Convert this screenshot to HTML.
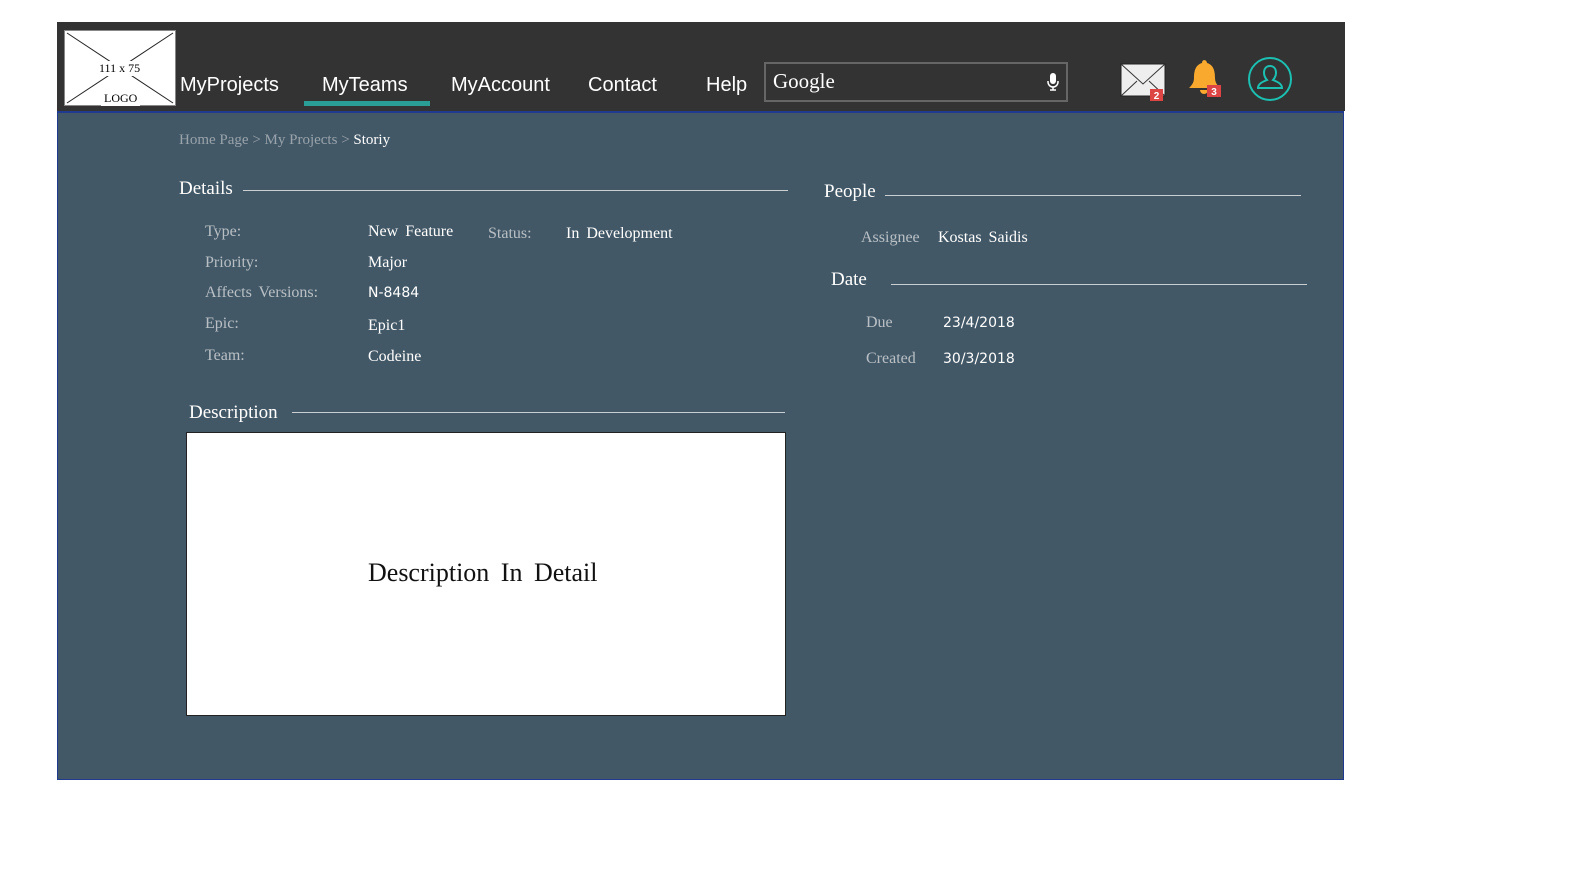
<!DOCTYPE html>
<html style="overflow:hidden;width:1579px;height:875px"><head><meta charset="utf-8"><style>
html,body{margin:0;padding:0}
body{width:1579px;height:875px;background:#fff;position:relative;overflow:hidden;font-family:"Liberation Serif",serif}
.a{position:absolute;white-space:nowrap}
#hdr{left:57px;top:22px;width:1288px;height:89px;background:#333}
#main{left:57px;top:111px;width:1285px;height:666px;background:#435867;border:1px solid #1f3a8f;border-top:2px solid #1f3a8f}
.nav{font-family:"Liberation Sans",sans-serif;color:#fff;font-size:20px;top:74px}
.lab{color:#b8c0c6;font-size:16px;word-spacing:3px}
.val{color:#fff;font-size:16px;word-spacing:3px}
.h{color:#fff;font-size:19px}
.ln{height:1px;background:#c9cfd3}
</style></head><body>
<div class="a" id="hdr"></div>
<div class="a" id="main"></div>
<div class="a" style="left:64px;top:30px;width:110px;height:74px;background:#fff;border:1px solid #888">
<svg width="110" height="74" style="position:absolute;left:0;top:0"><line x1="2" y1="2" x2="108" y2="72" stroke="#222"/><line x1="108" y1="2" x2="2" y2="72" stroke="#222"/></svg>
<div class="a" style="left:31px;top:30px;background:#fff;font-size:12px;padding:0 3px">111 x 75</div>
<div class="a" style="left:36px;top:60px;background:#fff;font-size:12px;padding:0 3px">LOGO</div>
</div>
<div class="a nav" style="left:180px">MyProjects</div>
<div class="a nav" style="left:322px">MyTeams</div>
<div class="a" style="left:304px;top:101px;width:126px;height:5px;background:#2a9d95"></div>
<div class="a nav" style="left:451px">MyAccount</div>
<div class="a nav" style="left:588px">Contact</div>
<div class="a nav" style="left:706px">Help</div>
<div class="a" style="left:764px;top:62px;width:300px;height:36px;border:2px solid #666"></div>
<div class="a" style="left:773px;top:69px;color:#fff;font-size:21px">Google</div>
<svg class="a" style="left:1045px;top:72px" width="16" height="20"><rect x="5" y="1" width="6" height="11" rx="3" fill="#fff"/><path d="M3 9v1a5 5 0 0 0 10 0V9M8 15v3M5 18h6" stroke="#fff" fill="none" stroke-width="1.5"/></svg>
<svg class="a" style="left:1120px;top:63px" width="48" height="40"><rect x="1" y="1" width="44" height="32" fill="#eee" stroke="#222"/><path d="M1 1l22 20 22-20M1 33l16-15M45 33l-16-15" stroke="#333" fill="none"/><rect x="30" y="26" width="13" height="12" fill="#d44"/><text x="36.5" y="36" fill="#fff" font-size="10" font-family="Liberation Sans" font-weight="bold" text-anchor="middle">2</text></svg>
<svg class="a" style="left:1186px;top:58px" width="40" height="42"><path d="M18 2a3 3 0 0 1 3 3c7 2 8 9 8 15 0 5 3 8 5 10H3c2-2 5-5 5-10 0-6 1-13 8-15a3 3 0 0 1 2-3zM14 32a4 4 0 0 0 8 0z" fill="#f8a92e"/><rect x="21" y="27" width="14" height="12" fill="#d44"/><text x="28" y="37" fill="#fff" font-size="10" font-family="Liberation Sans" font-weight="bold" text-anchor="middle">3</text></svg>
<svg class="a" style="left:1246px;top:55px" width="48" height="48"><circle cx="24" cy="24" r="21" fill="none" stroke="#1bc0b2" stroke-width="2"/><path d="M24 11c-4 0-6 3-6 7 0 3 2 6 3 7-5 2-9 4-9 8h24c0-4-4-6-9-8 1-1 3-4 3-7 0-4-2-7-6-7z" fill="none" stroke="#1bc0b2" stroke-width="2"/></svg>

<div class="a" style="left:179px;top:132px;font-size:15px;color:#98a3ab">Home Page &gt; My Projects &gt; <span style="color:#fff">Storiy</span></div>

<div class="a h" style="left:179px;top:178px">Details</div>
<div class="a ln" style="left:243px;top:190px;width:545px"></div>
<div class="a lab" style="left:205px;top:223px">Type:</div>
<div class="a val" style="left:368px;top:223px">New Feature</div>
<div class="a lab" style="left:488px;top:225px">Status:</div>
<div class="a val" style="left:566px;top:225px">In Development</div>
<div class="a lab" style="left:205px;top:254px">Priority:</div>
<div class="a val" style="left:368px;top:254px">Major</div>
<div class="a lab" style="left:205px;top:284px">Affects Versions:</div>
<div class="a val" style="left:368px;top:285px;font-family:'DejaVu Sans';font-size:14px">N-8484</div>
<div class="a lab" style="left:205px;top:315px">Epic:</div>
<div class="a val" style="left:368px;top:317px">Epic1</div>
<div class="a lab" style="left:205px;top:347px">Team:</div>
<div class="a val" style="left:368px;top:348px">Codeine</div>

<div class="a h" style="left:824px;top:181px">People</div>
<div class="a ln" style="left:885px;top:195px;width:416px"></div>
<div class="a lab" style="left:861px;top:229px">Assignee</div>
<div class="a val" style="left:938px;top:229px">Kostas Saidis</div>
<div class="a h" style="left:831px;top:269px">Date</div>
<div class="a ln" style="left:891px;top:284px;width:416px"></div>
<div class="a lab" style="left:866px;top:314px">Due</div>
<div class="a val" style="left:943px;top:315px;font-family:'DejaVu Sans';font-size:14px;font-weight:500">23/4/2018</div>
<div class="a lab" style="left:866px;top:350px">Created</div>
<div class="a val" style="left:943px;top:351px;font-family:'DejaVu Sans';font-size:14px">30/3/2018</div>

<div class="a h" style="left:189px;top:402px">Description</div>
<div class="a ln" style="left:292px;top:412px;width:493px"></div>
<div class="a" style="left:186px;top:432px;width:598px;height:282px;background:#fff;border:1px solid #222"></div>
<div class="a" style="left:368px;top:558px;font-size:26px;color:#111;word-spacing:5px">Description In Detail</div>
</body></html>
